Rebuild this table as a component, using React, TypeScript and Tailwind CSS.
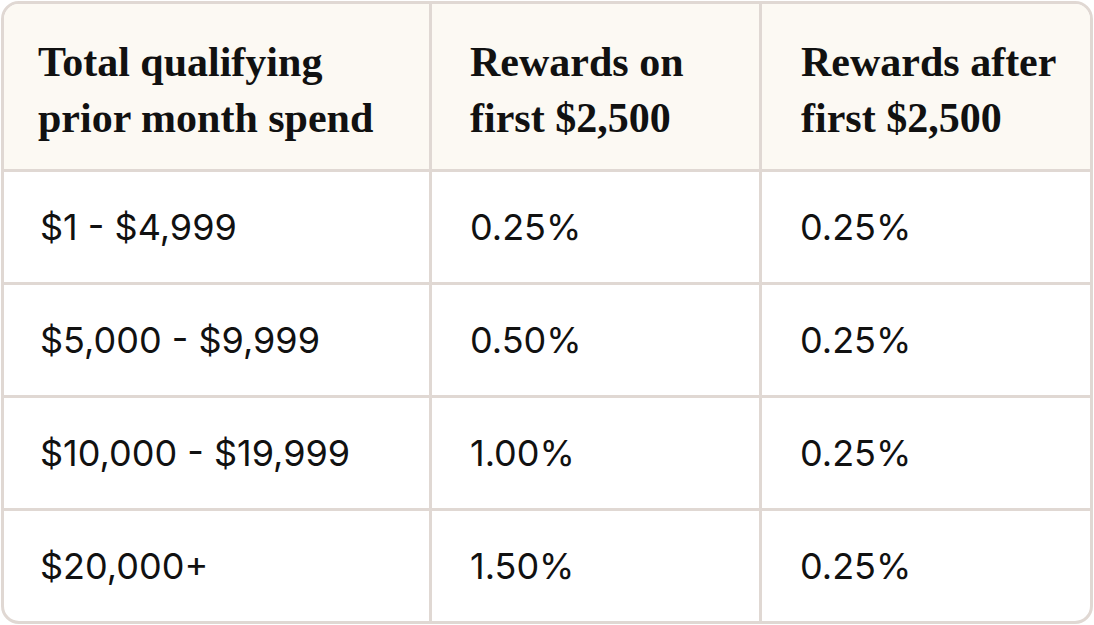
import React from 'react';

const rows = [
  ['$1 - $4,999', '0.25%', '0.25%'],
  ['$5,000 - $9,999', '0.50%', '0.25%'],
  ['$10,000 - $19,999', '1.00%', '0.25%'],
  ['$20,000+', '1.50%', '0.25%'],
];

const headers = [
  ['Total qualifying', 'prior month spend'],
  ['Rewards on', 'first $2,500'],
  ['Rewards after', 'first $2,500'],
];

const pad = ['pl-[34px]', 'pl-[38px]', 'pl-[39px]'];

const App = () => {
  return (
    <div className="w-[1094px] h-[625px] bg-white pt-px pl-px">
      <div className="w-[1092px] h-[623px] rounded-[18px] border-[3px] border-[#e0d8d3] overflow-hidden flex flex-col">
        <div className="grid grid-cols-[428px_330px_1fr] h-[168px] shrink-0 bg-[#fcf9f3] border-b-[3px] border-[#e0d8d3]">
          {headers.map((lines, i) => (
            <div
              key={i}
              className={`flex flex-col justify-center pt-[6px] ${pad[i]} text-[42px] leading-[56px] font-bold text-[#111] [font-family:'Liberation_Serif',serif] ${i < 2 ? 'border-r-[3px] border-[#e0d8d3]' : ''}`}
            >
              <span>{lines[0]}</span>
              <span>{lines[1]}</span>
            </div>
          ))}
        </div>
        {rows.map((row, r) => (
          <div
            key={r}
            className={`grid grid-cols-[428px_330px_1fr] ${r < 3 ? 'h-[113px] shrink-0 border-b-[3px] border-[#e0d8d3]' : 'flex-1'}`}
          >
            {row.map((cell, i) => (
              <div
                key={i}
                className={`flex items-center ${pad[i] === 'pl-[34px]' ? 'pl-[36px]' : 'pl-[38px]'} text-[36px] text-[#111] [font-family:'Inter',sans-serif] ${i < 2 ? 'border-r-[3px] border-[#e0d8d3]' : ''}`}
              >
                {cell}
              </div>
            ))}
          </div>
        ))}
      </div>
    </div>
  );
};

export default App;
